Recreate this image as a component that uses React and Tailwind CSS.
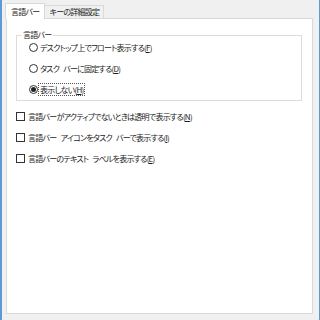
const font = { fontFamily: '"Noto Sans CJK JP", "Noto Sans", sans-serif', fontFeatureSettings: '"palt"' }

const Radio = ({ checked, children, focused }) => (
  <div className="flex items-center h-[21px]">
    <span className="w-[9px] h-[9px] rounded-full border border-[#333] bg-white flex items-center justify-center shrink-0">
      {checked && <span className="w-[5px] h-[5px] rounded-full bg-[#222]" />}
    </span>
    <span
      className={`ml-[1px] px-[1px] leading-[11px] ${focused ? 'outline outline-1 outline-dotted outline-[#555]' : ''}`}
    >
      {children}
    </span>
  </div>
)

const Check = ({ children }) => (
  <div className="flex items-center h-[21px]">
    <span className="w-[9px] h-[9px] border border-[#333] bg-white shrink-0" />
    <span className="ml-[3px]">{children}</span>
  </div>
)

const Key = ({ k }) => (
  <>
    (<span className="underline underline-offset-1">{k}</span>)
  </>
)

const Sp = () => <span className="inline-block w-[4px]" />

export default function App() {
  return (
    <div
      className="w-[320px] h-[320px] bg-[#f0f0f0] border-l-2 border-r border-[#5b9bd5] pl-[3px] pt-[3px] text-[8px] tracking-[-0.75px] text-[#1a1a1a] overflow-hidden"
      style={font}
    >
      <div className="flex items-end h-[15px] relative z-10">
        <div className="h-[16px] -mb-px bg-white border border-b-0 border-[#d9d9d9] px-[5px] flex items-center">
          言語バー
        </div>
        <div className="h-[13px] bg-[#f0f0f0] border border-b-0 border-l-0 border-[#d9d9d9] px-[4px] flex items-center">
          キーの詳細設定
        </div>
      </div>
      <div className="ml-px w-[307px] h-[296px] bg-white border border-[#d9d9d9] pl-[9px] pr-[10px] pt-[16px]">
        <div className="relative border border-[#dcdcdc] h-[66px] pl-[12px] pt-[1px]">
          <span className="absolute -top-[7px] left-[4px] bg-white px-[2px] leading-[12px]">言語バー</span>
          <Radio>デスクトップ上でフロート表示する<Key k="F" /></Radio>
          <Radio>タスク<Sp />バーに固定する<Key k="D" /></Radio>
          <Radio checked focused>表示しない<Key k="H" /></Radio>
        </div>
        <div className="mt-[5px]">
          <Check>言語バーがアクティブでないときは透明で表示する<Key k="N" /></Check>
          <Check>言語バー<Sp />アイコンをタスク<Sp />バーで表示する<Key k="I" /></Check>
          <Check>言語バーのテキスト<Sp />ラベルを表示する<Key k="E" /></Check>
        </div>
      </div>
    </div>
  )
}
